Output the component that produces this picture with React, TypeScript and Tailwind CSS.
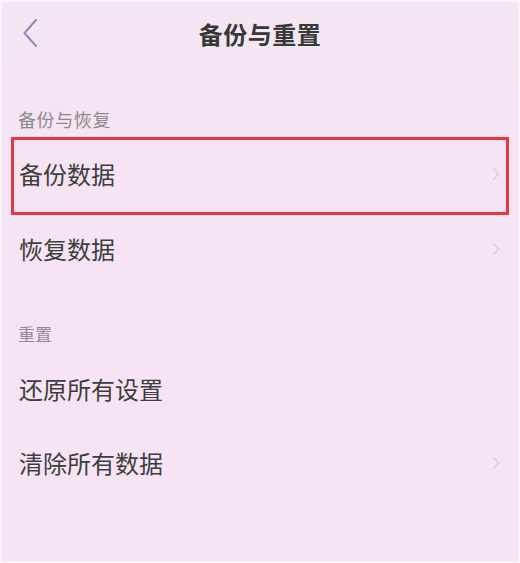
import React from "react";

const Chevron = () => (
  <svg width="8" height="14" viewBox="0 0 8 14" fill="none" className="shrink-0">
    <path d="M1.5 1.5 L6.5 7 L1.5 12.5" stroke="#d8cfd8" strokeWidth="1.4" strokeLinecap="round" strokeLinejoin="round" />
  </svg>
);

const Row = ({ label, chevron = true, className = "" }: { label: string; chevron?: boolean; className?: string }) => (
  <div className={`relative flex items-center justify-between pl-[17px] pr-[18px] ${className}`}>
    <span className="text-[24px] leading-[32px] text-[#3d3d3d]">{label}</span>
    {chevron && <Chevron />}
  </div>
);

export default function App() {
  return (
    <div
      className="relative w-[520px] h-[563px] overflow-hidden bg-[#f6e4f4] border-2 border-[#fbf3fa] flex flex-col"
      style={{ fontFamily: '"Noto Sans CJK SC", "Noto Sans", sans-serif' }}
    >
      <div className="relative h-[64px] shrink-0 bg-[#f4e7f3] flex items-center justify-center">
        <svg width="16" height="30" viewBox="0 0 16 30" fill="none" className="absolute left-[20px] top-[16px]">
          <path d="M14 2 L2.5 15 L14 28" stroke="#8a8fb6" strokeWidth="2" strokeLinecap="round" strokeLinejoin="round" />
        </svg>
        <span className="text-[24px] leading-[32px] font-semibold text-[#383838] tracking-[0.5px]">备份与重置</span>
      </div>

      <div className="pt-[41px] pb-[4px] pl-[16px]">
        <span className="text-[18px] leading-[24px] text-[#8c8a8c] tracking-[0.6px]">备份与恢复</span>
      </div>

      <Row label="备份数据" className="h-[75px]" />
      <Row label="恢复数据" className="h-[75px]" />

      <div className="pt-[36px] pb-[6px] pl-[16px]">
        <span className="text-[17px] leading-[24px] text-[#8f8d8f]">重置</span>
      </div>

      <Row label="还原所有设置" chevron={false} className="h-[74px]" />
      <Row label="清除所有数据" className="h-[74px]" />

      <div className="flex-1" />

      <div className="absolute left-[9px] top-[135px] w-[498px] h-[78px] border-[3px] border-[#e23a3c] pointer-events-none" />
    </div>
  );
}
